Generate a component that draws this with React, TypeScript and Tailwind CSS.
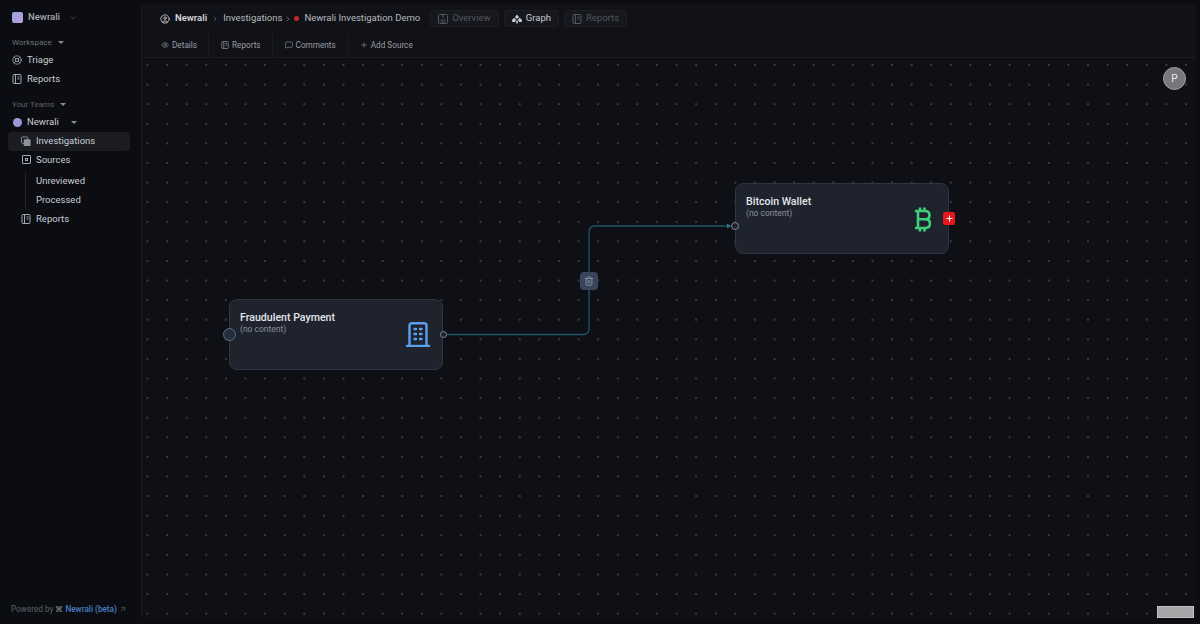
// App.tsx
// Newrali — investigation graph view
import { Eye, MessageSquare, Plus, ChevronDown, ChevronRight, CircleUser, ArrowUpRight, Trash2, LifeBuoy } from 'lucide-react';
import type { ReactNode } from 'react';

const FONT = 'font-["Roboto","Liberation_Sans",sans-serif]';

function Caret() {
  return <span className="block w-0 h-0 border-l-[3px] border-r-[3px] border-t-[3px] border-l-transparent border-r-transparent border-t-[#8a8d94]" />;
}

function StackIcon() {
  return (
    <svg width="11" height="11" viewBox="0 0 11 11" fill="none">
      <rect x="0.5" y="0.5" width="7" height="7" rx="1" stroke="#8f9298" />
      <rect x="3" y="3" width="7.5" height="7.5" rx="1" fill="#8f9298" />
    </svg>
  );
}

function SourceIcon() {
  return (
    <span className="w-[9px] h-[9px] border border-[#a3a6ad] rounded-[1px] flex items-center justify-center">
      <span className="w-[3px] h-[3px] border border-[#a3a6ad]" />
    </span>
  );
}

// 리포트 아이콘 — 왼쪽 책등이 있는 사각형
function ReportIcon({ size = 10, color = '#a3a6ad' }: { size?: number; color?: string }) {
  return (
    <svg width={size} height={size} viewBox="0 0 10 10" fill="none" stroke={color}>
      <rect x="1" y="0.5" width="8" height="9" rx="1" />
      <path d="M3.5 1V9M5.5 3H7.5M5.5 5H7.5" />
    </svg>
  );
}

function SideItem({ icon, label, active, indent }: { icon?: ReactNode; label: string; active?: boolean; indent?: boolean }) {
  return (
    <div className={`flex items-center h-[18.5px] gap-[5px] rounded text-[9.5px] text-[#c9ccd2] ${indent ? 'pl-[13px]' : 'pl-[4px]'} ${active ? 'bg-[#1b1d23]' : ''}`}>
      <span className="w-[10px] flex justify-center text-[#a3a6ad]">{icon}</span>
      <span>{label}</span>
    </div>
  );
}

function Sidebar() {
  return (
    <aside className="w-[141px] shrink-0 flex flex-col pl-[8px] pr-[11px] pt-[11px] pb-[9px]">
      <div className="flex items-center gap-[5px] pl-[4px] h-[13px]">
        <span className="w-[11px] h-[11px] rounded-[2px] bg-gradient-to-br from-[#8fa4dc] to-[#c39ae0]" />
        <span className="text-[9.5px] font-medium text-[#a5a7ad]">Newrali</span>
        <ChevronDown size={8} className="text-[#5e6066] ml-[4px]" />
      </div>
      <div className="flex items-center gap-[6px] mt-[13px] pl-[4px] text-[8px] leading-[11px] text-[#6f7178]">
        <span>Workspace</span>
        <Caret />
      </div>
      <div className="mt-[3px] flex flex-col">
        <SideItem icon={<LifeBuoy size={10} />} label="Triage" />
        <SideItem icon={<ReportIcon />} label="Reports" />
      </div>
      <div className="flex items-center gap-[6px] mt-[11px] pl-[4px] text-[8px] leading-[11px] text-[#5f6168]">
        <span>Your Teams</span>
        <Caret />
      </div>
      <div className="flex items-center h-[18px] gap-[5px] mt-[3.5px] pl-[5px] text-[9.5px] text-[#c9ccd2]">
        <span className="w-[9px] h-[9px] rounded-full bg-gradient-to-br from-[#8fa4dc] to-[#a98ad8]" />
        <span>Newrali</span>
        <span className="ml-[7px]"><Caret /></span>
      </div>
      <div className="mt-[0.5px] flex flex-col">
        <SideItem indent active icon={<StackIcon />} label="Investigations" />
        <SideItem indent icon={<SourceIcon />} label="Sources" />
      </div>
      <div className="ml-[17px] mt-[3px] border-l border-[#26282e] pl-[10px] flex flex-col text-[9.5px] text-[#c9ccd2]">
        <div className="h-[18.5px] flex items-center">Unreviewed</div>
        <div className="h-[18.5px] flex items-center">Processed</div>
      </div>
      <div className="mt-[1px]">
        <SideItem indent icon={<ReportIcon />} label="Reports" />
      </div>
      <div className="mt-auto flex items-center gap-[2px] pl-[3px] text-[8.2px] whitespace-nowrap text-[#5f6168]">
        <span>Powered by</span>
        <span className="text-[#8a8d94]">⌘</span>
        <span className="text-[#4a7fc0] font-medium">Newrali (beta)</span>
        <ArrowUpRight size={8} />
      </div>
    </aside>
  );
}

function ViewTab({ icon, label, active }: { icon: ReactNode; label: string; active?: boolean }) {
  return (
    <div className={`flex items-center h-[17px] gap-[4px] px-[7px] rounded-[3px] border border-[#1c1e24] bg-[#16181e] text-[9.5px] ${active ? 'text-[#c9ccd2]' : 'text-[#53565d]'}`}>
      {icon}
      <span>{label}</span>
    </div>
  );
}

function ActionBtn({ icon, label, last }: { icon: ReactNode; label: string; last?: boolean }) {
  return (
    <div className={`flex items-center h-[24px] gap-[3px] text-[8.2px] text-[#9a9da4] pl-[12px] pr-[11px] ${last ? '' : 'border-r border-[#191b20]'}`}>
      <span className="text-[#8a8d94]">{icon}</span>
      <span>{label}</span>
    </div>
  );
}

function OverviewIcon() {
  return (
    <svg width="10" height="10" viewBox="0 0 10 10" fill="none" stroke="#53565d">
      <rect x="0.5" y="0.5" width="9" height="9" rx="1" />
      <path d="M5 0.5V4M2.5 6H7.5M2.5 8H7.5" />
    </svg>
  );
}

function GraphIcon() {
  return (
    <svg width="10" height="10" viewBox="0 0 10 10" fill="#c9ccd2">
      <path d="M5 0.5L7 3L5 5L3 3Z" />
      <path d="M2.2 3.8L4 5.6L3 8H0.4L0 6Z" />
      <path d="M7.8 3.8L6 5.6L7 8H9.6L10 6Z" />
      <rect x="4.2" y="6.4" width="1.6" height="3" />
    </svg>
  );
}

function Header() {
  return (
    <header className="shrink-0 h-[54px] flex flex-col border-b border-[#191b20]">
      <div className="h-[29px] shrink-0 flex items-center pl-[18px] text-[9.5px] text-[#b5b8be]">
        <CircleUser size={10} className="text-[#d0d2d6]" />
        <span className="ml-[5px] font-semibold text-[#d5d7db]">Newrali</span>
        <ChevronRight size={8} className="ml-[4px] text-[#6b6e74]" />
        <span className="ml-[4px]">Investigations</span>
        <ChevronRight size={8} className="ml-[2px] text-[#8a8d94]" />
        <span className="ml-[2px] w-[5px] h-[5px] rounded-full bg-[#c2282e]" />
        <span className="ml-[5px]">Newrali Investigation Demo</span>
        <div className="ml-[10px] flex gap-[5px]">
          <ViewTab icon={<OverviewIcon />} label="Overview" />
          <ViewTab active icon={<GraphIcon />} label="Graph" />
          <ViewTab icon={<ReportIcon color="#53565d" />} label="Reports" />
        </div>
      </div>
      <div className="flex items-center pl-[7px]">
        <ActionBtn icon={<Eye size={8} />} label="Details" />
        <ActionBtn icon={<ReportIcon size={8} color="#8a8d94" />} label="Reports" />
        <ActionBtn icon={<MessageSquare size={8} />} label="Comments" />
        <ActionBtn last icon={<Plus size={8} />} label="Add Source" />
      </div>
    </header>
  );
}

function BuildingIcon() {
  return (
    <svg width="24" height="25" viewBox="0 0 24 25" fill="none" stroke="#5aa0ee" strokeWidth="2.4">
      <path d="M3.5 24V3.5Q3.5 1.2 6 1.2H18Q20.5 1.2 20.5 3.5V24" />
      <path d="M0 24H24" />
      <path d="M8.5 7H10M14 7H15.5M8.5 12H10M14 12H15.5M8.5 17H10M14 17H15.5" strokeLinecap="round" />
    </svg>
  );
}

function BitcoinIcon() {
  return (
    <svg width="16" height="25" viewBox="0 0 16 25" fill="none" stroke="#3ecf78" strokeWidth="2.6">
      <path d="M3 4H10Q14.5 4 14.5 8.2Q14.5 12.2 10 12.2H3M10 12.2Q15 12.2 15 16.5Q15 21 10 21H3M3 4V21M0 4H3M0 21H3" />
      <path d="M5 4V0.5M9.5 4V0.5M5 21V24.5M9.5 21V24.5" />
    </svg>
  );
}

function GraphNode({ title, className, icon }: { title: string; className: string; icon: ReactNode }) {
  return (
    <div className={`absolute w-[214px] h-[71px] rounded-[8px] border border-[#2f3542] bg-[#1e232d] pl-[10px] pr-[13px] flex items-center justify-between ${className}`}>
      <div className="self-start pt-[11px]">
        <div className="text-[10.6px] leading-[13px] font-medium text-[#e4e6ea]">{title}</div>
        <div className="text-[8.5px] leading-[10px] text-[#8b8f98]">(no content)</div>
      </div>
      {icon}
    </div>
  );
}

function Canvas() {
  return (
    <div className="relative flex-1 bg-[#0f1015] bg-[radial-gradient(circle,#3a3c42_1px,transparent_1.5px)] bg-[size:19.6px_19.6px] bg-[position:-4.3px_-2.8px] overflow-hidden">
      {/* 캔버스 원점: x=142, y=58 */}
      <svg className="absolute inset-0 w-full h-full" fill="none">
        <path d="M305 276.5 H441 Q447 276.5 447 270.5 V174 Q447 168 453 168 H588" stroke="#1f5566" strokeWidth="1.3" />
        <path d="M585 165.5 L589 168 L585 170.5 Z" fill="#2f7d92" />
      </svg>

      <GraphNode
        title="Fraudulent Payment"
        className="left-[87px] top-[241px]"
        icon={<span className="mr-[-1px]"><BuildingIcon /></span>}
      />
      <span className="absolute left-[81px] top-[270px] w-[13px] h-[13px] rounded-full bg-[#252d3b] border-[1.5px] border-[#56708f]" />
      <span className="absolute left-[298px] top-[273px] w-[7px] h-[7px] rounded-full bg-[#1e232d] border border-[#7d88a0]" />

      <GraphNode
        title="Bitcoin Wallet"
        className="left-[593px] top-[125px]"
        icon={<span className="mt-[1px] mr-[4px]"><BitcoinIcon /></span>}
      />
      <span className="absolute left-[589px] top-[164px] w-[8px] h-[8px] rounded-full bg-[#1e232d] border border-[#7d88a0]" />
      <span className="absolute left-[801px] top-[154px] w-[12px] h-[13px] rounded-[2px] bg-[#e5171b] flex items-center justify-center text-white">
        <Plus size={9} strokeWidth={3} />
      </span>

      <span className="absolute left-[438px] top-[214px] w-[18px] h-[18px] rounded-[4px] bg-[#3a4559] flex items-center justify-center text-[#8d99ae]">
        <Trash2 size={10} />
      </span>

      <span className="absolute left-[1021px] top-[9px] w-[23px] h-[23px] rounded-full bg-[#77787b] border border-[#a0a1a4] flex items-center justify-center text-[10px] text-[#ececec]">P</span>
      <span className="absolute left-[1015px] bottom-[0px] w-[37px] h-[12px] bg-[#a4a5a6] border border-[#c2c3c4]" />
    </div>
  );
}

export default function App() {
  return (
    <div className={`${FONT} w-[1200px] h-[624px] flex bg-[#0b0d12] overflow-hidden`}>
      <Sidebar />
      <main className="flex-1 flex flex-col mt-[4px] mb-[6px] mr-[4px] rounded-l-[3px] border-l border-[#1a1c21] bg-[#111217] overflow-hidden">
        <Header />
        <Canvas />
      </main>
    </div>
  );
}
